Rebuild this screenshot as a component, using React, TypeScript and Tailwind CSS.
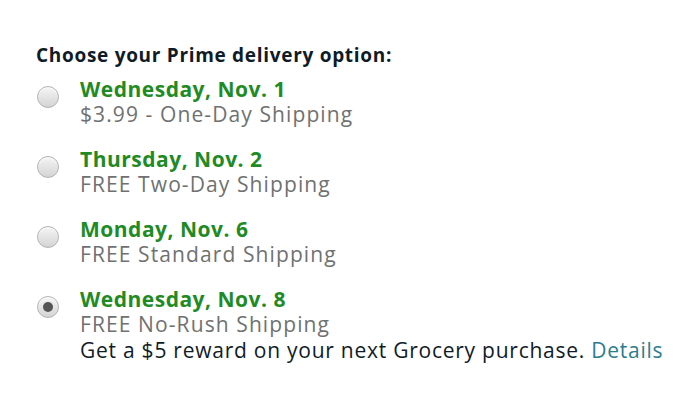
import React, { useState } from 'react'

const options = [
  { date: 'Wednesday, Nov. 1', label: '$3.99 - One-Day Shipping' },
  { date: 'Thursday, Nov. 2', label: 'FREE Two-Day Shipping' },
  { date: 'Monday, Nov. 6', label: 'FREE Standard Shipping' },
  { date: 'Wednesday, Nov. 8', label: 'FREE No-Rush Shipping', reward: true },
]

function Radio({ checked }: { checked: boolean }) {
  return (
    <span className="mt-[9px] ml-[1px] flex h-[22px] w-[22px] flex-shrink-0 items-center justify-center rounded-full border border-[#b3b3b3] bg-gradient-to-b from-[#f5f5f5] to-[#d4d4d4] shadow-[inset_0_1px_1px_rgba(255,255,255,0.9)]">
      {checked && <span className="h-[10px] w-[10px] rounded-full bg-[#555]" />}
    </span>
  )
}

export default function App() {
  const [selected, setSelected] = useState(3)

  return (
    <div className="h-[400px] w-[686px] bg-white" style={{ fontFamily: '"Open Sans", "Noto Sans", Arial, sans-serif' }}>
      <div className="pl-[36px] pt-[42px]">
        <h2 className="text-[19px] font-bold leading-[26px] tracking-[0.7px] text-[#0f1b26]">
          Choose your Prime delivery option:
        </h2>

        <div className="mt-[9px] flex flex-col gap-[20px]">
          {options.map((o, i) => (
            <label key={o.date} className="flex cursor-pointer gap-[21px]" onClick={() => setSelected(i)}>
              <Radio checked={selected === i} />
              <div className="text-[21px] leading-[25px]">
                <div className="font-bold tracking-[0.5px] text-[#1f8b24]">{o.date}</div>
                <div className="tracking-[1.1px] text-[#6f7171]">{o.label}</div>
                {o.reward && (
                  <div className="mt-[1px] tracking-[0.75px] text-[#0f1b26]">
                    Get a $5 reward on your next Grocery purchase.{' '}
                    <a href="#" className="text-[#2b7d8c]">Details</a>
                  </div>
                )}
              </div>
            </label>
          ))}
        </div>
      </div>
    </div>
  )
}
